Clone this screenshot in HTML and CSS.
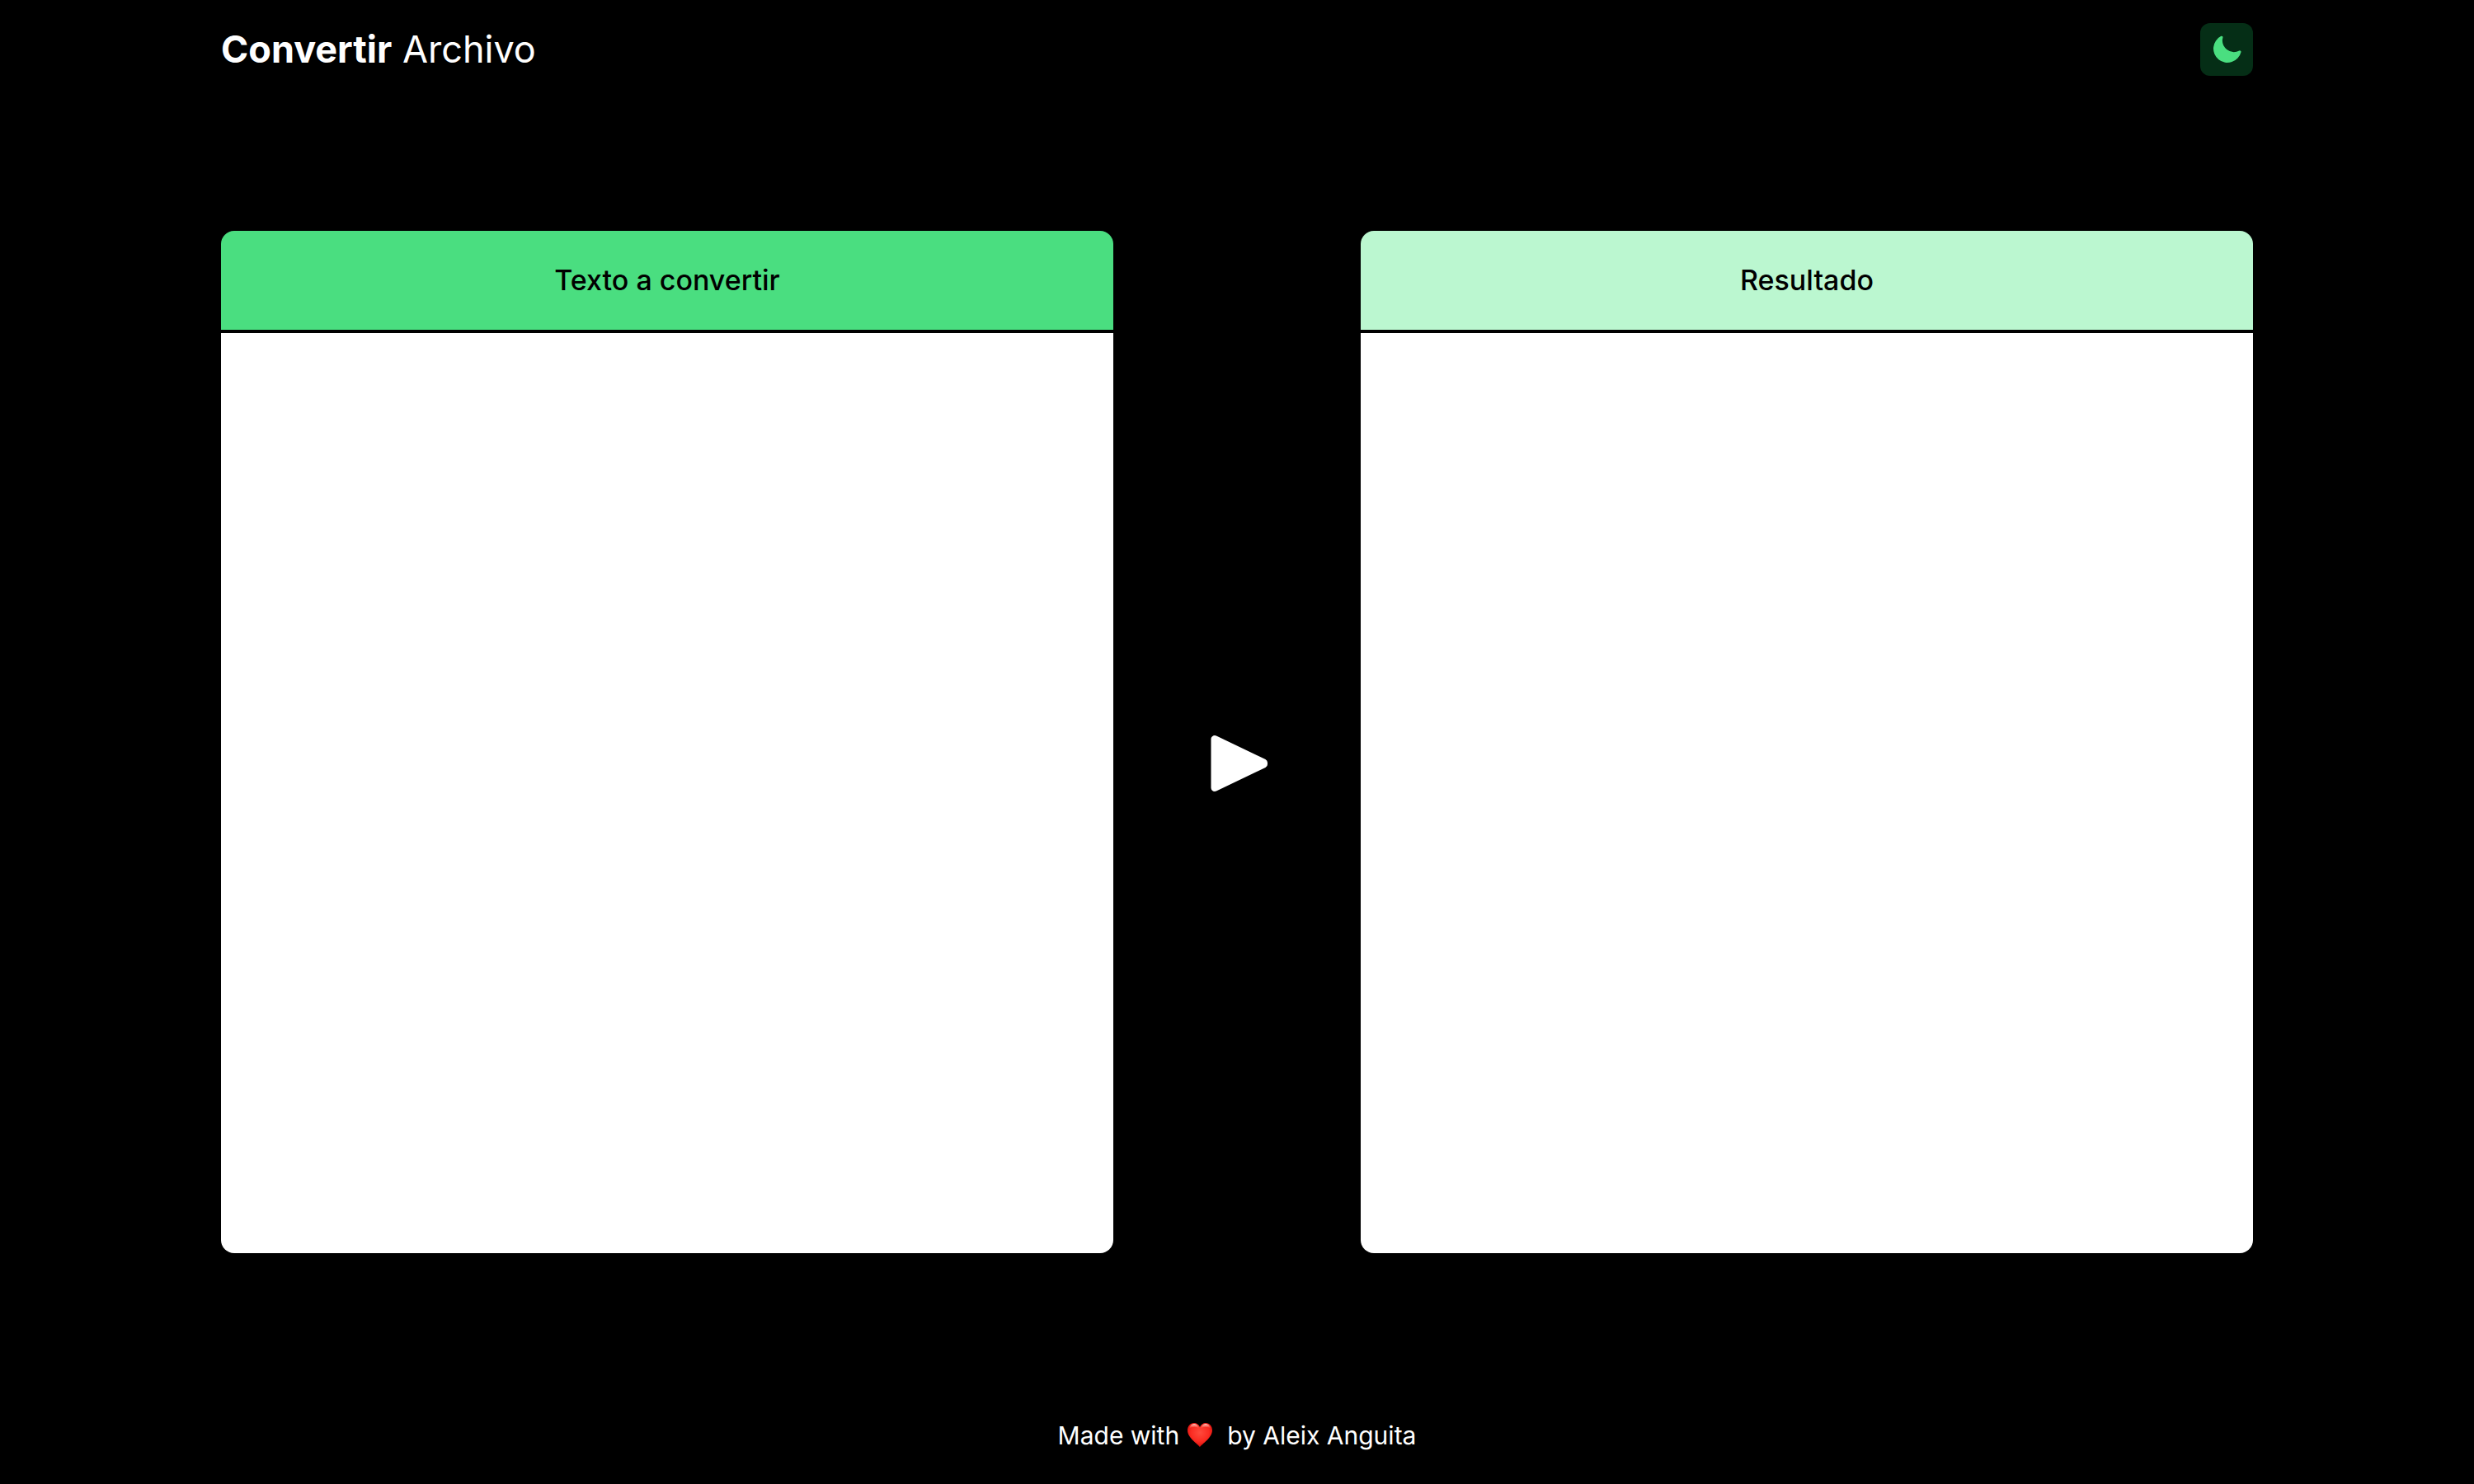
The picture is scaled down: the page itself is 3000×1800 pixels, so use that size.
FILE: index.html
```html
<!DOCTYPE html>
<html lang="es">
<head>
  <meta charset="utf-8">
  <meta name="viewport" content="width=device-width, initial-scale=1">
  <title>Convertir Archivo</title>
  <link rel="stylesheet" href="styles.css">
</head>
<body>
  <header class="header">
    <h1 class="title"><strong>Convertir</strong> Archivo</h1>
    <button class="theme-button" type="button" aria-label="Modo oscuro">
      <svg class="moon" viewBox="0 0 20 20" fill="currentColor" aria-hidden="true">
        <path d="M7.455 2.004a.75.75 0 0 1 .26.77 7 7 0 0 0 9.958 7.967.75.75 0 0 1 1.067.853A8.5 8.5 0 1 1 6.647 1.921a.75.75 0 0 1 .808.083z"/>
      </svg>
    </button>
  </header>

  <main class="converter">
    <section class="panel">
      <label class="panel-title panel-title-source" for="source">Texto a convertir</label>
      <textarea class="panel-text" id="source"></textarea>
    </section>
    <button class="convert-button" type="button" aria-label="Convertir">
      <svg class="play" viewBox="0 0 80 80" fill="currentColor" stroke="currentColor" stroke-width="9" stroke-linejoin="round" aria-hidden="true">
        <path d="M13 10.500V69.500L72.500 41V39Z"/>
      </svg>
    </button>
    <section class="panel">
      <label class="panel-title panel-title-result" for="result">Resultado</label>
      <textarea class="panel-text" id="result" readonly></textarea>
    </section>
  </main>

  <footer class="footer">
    <span>Made with</span>
    <svg class="heart" viewBox="0 0 30 30" role="img" aria-label="amor">
      <defs>
        <radialGradient id="heart-fill" cx="0.5" cy="0.4" r="0.6">
          <stop offset="0" stop-color="#ff4a3c"/>
          <stop offset="0.6" stop-color="#fb2c22"/>
          <stop offset="1" stop-color="#d90f0c"/>
        </radialGradient>
        <linearGradient id="heart-shine" x1="0" y1="0" x2="0" y2="1">
          <stop offset="0" stop-color="#ffd9d2"/>
          <stop offset="1" stop-color="#ff6a58" stop-opacity="0"/>
        </linearGradient>
      </defs>
      <path fill="url(#heart-fill)" d="M15 29C13 26 0 18 0 9C0 4 3 0 8 0C11 0 14 2 15 5C16 2 19 0 22 0C27 0 30 4 30 9C30 18 17 26 15 29Z"/>
      <path fill="url(#heart-shine)" d="M2 7C3 3 5 1 8 1C11 1 13 3 14 7C11 4 6 4 2 7ZM16 7C17 3 19 1 22 1C25 1 27 3 28 7C24 4 19 4 16 7Z"/>
    </svg>
    <span>by Aleix Anguita</span>
  </footer>
</body>
</html>
```
FILE: styles.css
```css
* {
  box-sizing: border-box;
}

html {
  background: #000;
}

body {
  display: flex;
  flex-direction: column;
  max-width: 2496px;
  min-height: 100vh;
  margin: 0 auto;
  padding: 0 16px;
  background: #000;
  color: #fff;
  font-family: Inter, "Liberation Sans", sans-serif;
}

.header {
  display: flex;
  align-items: center;
  justify-content: space-between;
  padding: 28px 0;
}

.title {
  margin: 0;
  font-size: 45px;
  line-height: 64px;
  font-weight: 400;
}

.title strong {
  font-weight: 700;
}

button {
  display: flex;
  align-items: center;
  justify-content: center;
  padding: 0;
  border: 0;
  background: none;
  color: inherit;
  cursor: pointer;
}

.theme-button {
  width: 64px;
  height: 64px;
  border-radius: 12px;
  background: #052e16;
  color: #4ade80;
}

.moon {
  width: 40px;
  height: 40px;
}

.converter {
  display: grid;
  flex: 1;
  grid-template-columns: 1fr 300px 1fr;
  padding: 160px 0;
}

.panel {
  display: flex;
  flex-direction: column;
  gap: 4px;
  overflow: hidden;
  border-radius: 16px;
}

.panel-title {
  padding: 36px 16px;
  color: #000;
  font-size: 34px;
  line-height: 48px;
  font-weight: 500;
  text-align: center;
}

.panel-title-source {
  background: #4ade80;
}

.panel-title-result {
  background: #bbf7d0;
}

.panel-text {
  flex: 1;
  width: 100%;
  min-height: 320px;
  padding: 32px;
  border: 0;
  outline: 0;
  background: #fff;
  color: #000;
  font: inherit;
  font-size: 30px;
  resize: none;
}

.convert-button {
  padding-top: 52px;
}

.play {
  width: 80px;
  height: 80px;
}

.footer {
  display: flex;
  align-items: center;
  justify-content: center;
  gap: 10px;
  padding: 37px 0 35px;
  font-size: 30px;
  line-height: 48px;
}

.heart {
  width: 30px;
  height: 30px;
  margin-right: 8px;
}
```
